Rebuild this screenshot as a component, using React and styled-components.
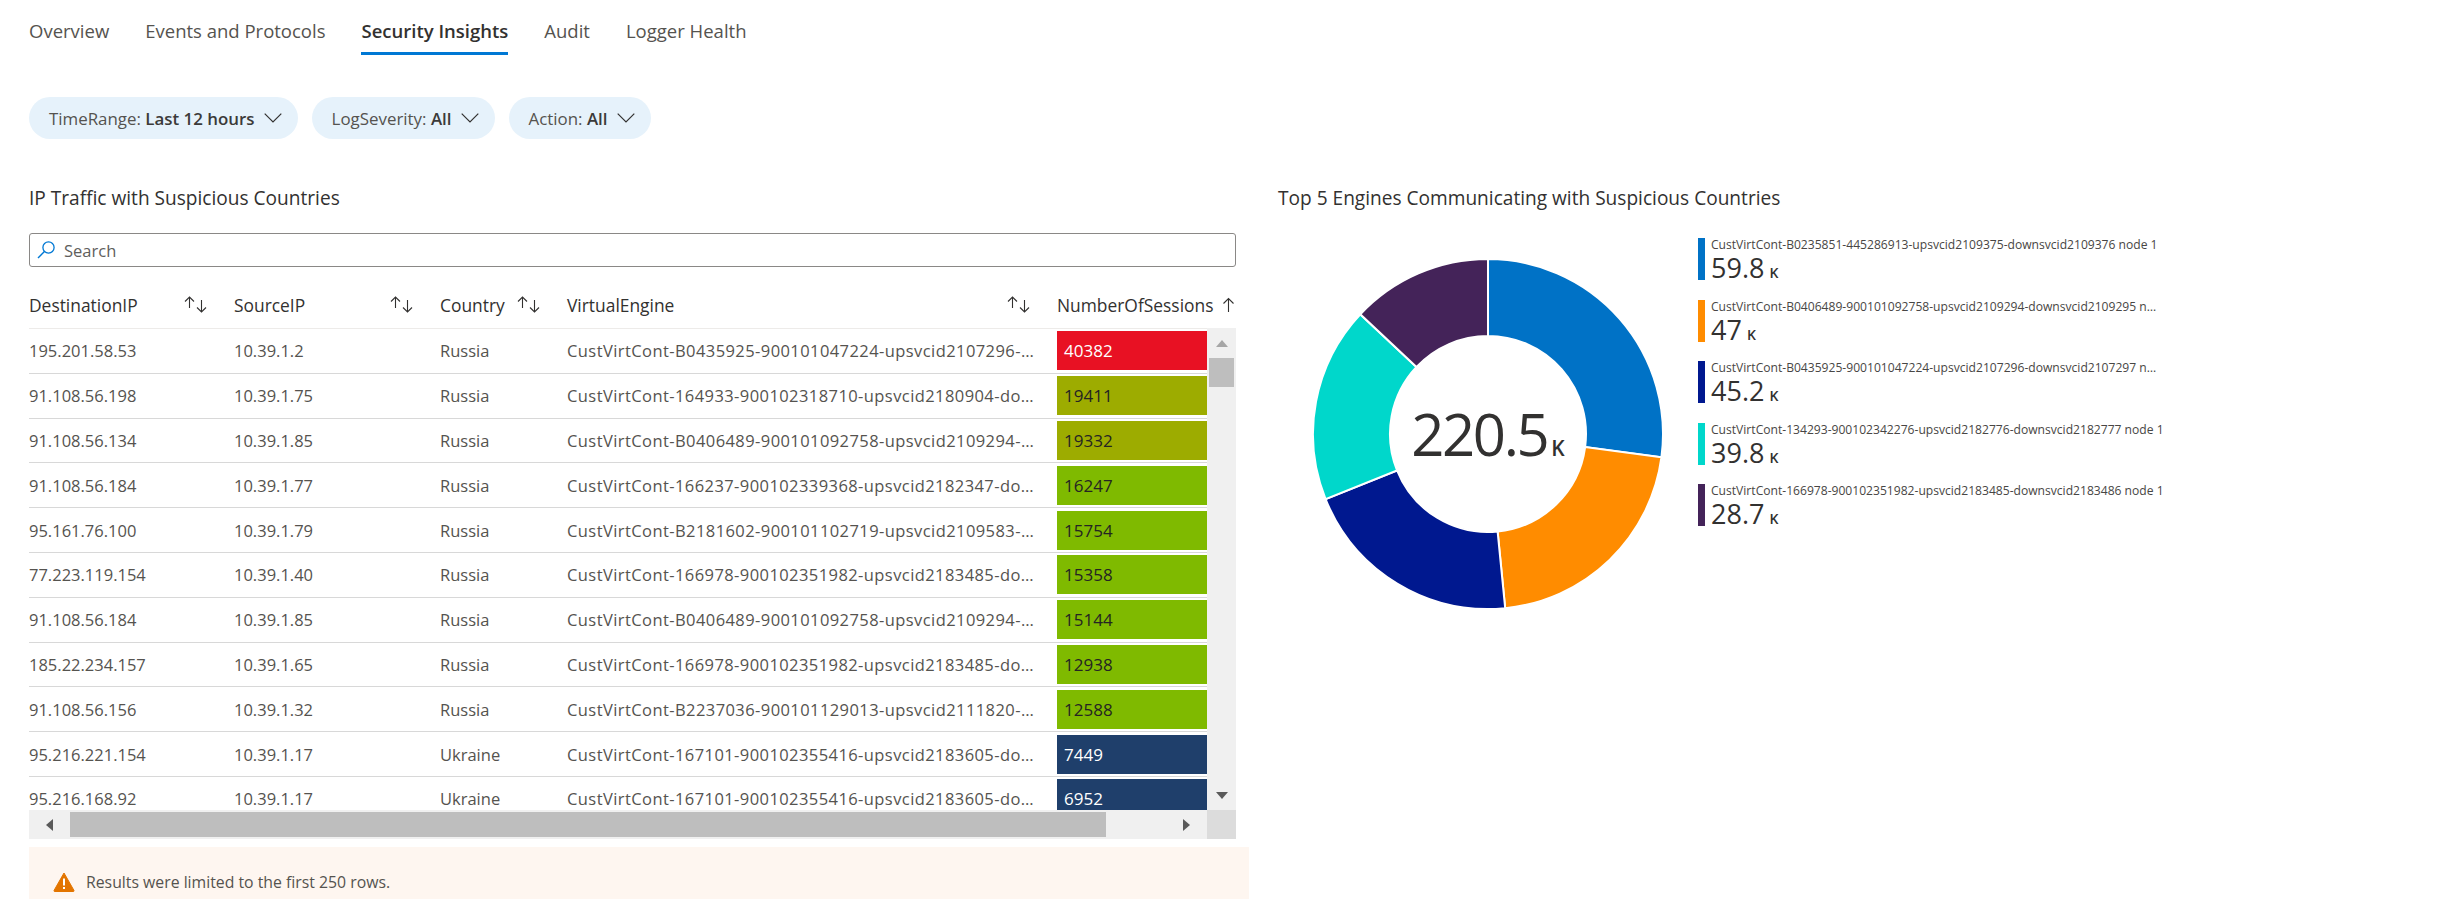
import React from "react";
import styled, { createGlobalStyle } from "styled-components";

const FONT = `"Open Sans", "Noto Sans", "Liberation Sans", sans-serif`;

const tabs = ["Overview", "Events and Protocols", "Security Insights", "Audit", "Logger Health"];

const filters = [
  { name: "TimeRange", value: "Last 12 hours" },
  { name: "LogSeverity", value: "All" },
  { name: "Action", value: "All" },
];

const columns = [
  { title: "DestinationIP", sort: "both" },
  { title: "SourceIP", sort: "both" },
  { title: "Country", sort: "both" },
  { title: "VirtualEngine", sort: "both" },
  { title: "NumberOfSessions", sort: "up" },
];

const heat = {
  red: { bg: "#e81123", fg: "#ffffff" },
  olive: { bg: "#9dac00", fg: "#252423" },
  green: { bg: "#7fba00", fg: "#252423" },
  navy: { bg: "#1f3f6b", fg: "#ffffff" },
};

const rows = [
  ["195.201.58.53", "10.39.1.2", "Russia", "B0435925-900101047224-upsvcid2107296-downsvcid2107297 node 1", 40382, "red"],
  ["91.108.56.198", "10.39.1.75", "Russia", "164933-900102318710-upsvcid2180904-downsvcid2180905 node 1", 19411, "olive"],
  ["91.108.56.134", "10.39.1.85", "Russia", "B0406489-900101092758-upsvcid2109294-downsvcid2109295 node 1", 19332, "olive"],
  ["91.108.56.184", "10.39.1.77", "Russia", "166237-900102339368-upsvcid2182347-downsvcid2182348 node 1", 16247, "green"],
  ["95.161.76.100", "10.39.1.79", "Russia", "B2181602-900101102719-upsvcid2109583-downsvcid2109584 node 1", 15754, "green"],
  ["77.223.119.154", "10.39.1.40", "Russia", "166978-900102351982-upsvcid2183485-downsvcid2183486 node 1", 15358, "green"],
  ["91.108.56.184", "10.39.1.85", "Russia", "B0406489-900101092758-upsvcid2109294-downsvcid2109295 node 1", 15144, "green"],
  ["185.22.234.157", "10.39.1.65", "Russia", "166978-900102351982-upsvcid2183485-downsvcid2183486 node 1", 12938, "green"],
  ["91.108.56.156", "10.39.1.32", "Russia", "B2237036-900101129013-upsvcid2111820-downsvcid2111821 node 1", 12588, "green"],
  ["95.216.221.154", "10.39.1.17", "Ukraine", "167101-900102355416-upsvcid2183605-downsvcid2183606 node 1", 7449, "navy"],
  ["95.216.168.92", "10.39.1.17", "Ukraine", "167101-900102355416-upsvcid2183605-downsvcid2183606 node 1", 6952, "navy"],
];

const engines = [
  { label: "CustVirtCont-B0235851-445286913-upsvcid2109375-downsvcid2109376 node 1", value: 59.8, color: "#0072c6" },
  { label: "CustVirtCont-B0406489-900101092758-upsvcid2109294-downsvcid2109295 node 1", value: 47, color: "#ff8c00", long: true },
  { label: "CustVirtCont-B0435925-900101047224-upsvcid2107296-downsvcid2107297 node 1", value: 45.2, color: "#00188f", long: true },
  { label: "CustVirtCont-134293-900102342276-upsvcid2182776-downsvcid2182777 node 1", value: 39.8, color: "#00d7cb" },
  { label: "CustVirtCont-166978-900102351982-upsvcid2183485-downsvcid2183486 node 1", value: 28.7, color: "#442359" },
];

const polar = (r, deg) => {
  const a = ((deg - 90) * Math.PI) / 180;
  return `${(175 + r * Math.cos(a)).toFixed(2)} ${(175 + r * Math.sin(a)).toFixed(2)}`;
};

const slicePath = (from, to) => {
  const large = to - from > 180 ? 1 : 0;
  return `M${polar(175, from)} A175 175 0 ${large} 1 ${polar(175, to)} L${polar(98, to)} A98 98 0 ${large} 0 ${polar(98, from)} Z`;
};

const total = engines.reduce((sum, e) => sum + e.value, 0);

const Donut = () => {
  let angle = 0;
  return (
    <svg width="350" height="350" viewBox="0 0 350 350">
      {engines.map((e) => {
        const from = angle;
        angle += (e.value / total) * 360;
        return <path key={e.label} d={slicePath(from, angle)} fill={e.color} stroke="#fff" strokeWidth="2" />;
      })}
    </svg>
  );
};

const Chevron = () => (
  <svg width="18" height="10" viewBox="0 0 18 10" fill="none">
    <path d="M0.7 0.7 L9 9 L17.3 0.7" stroke="#323130" strokeWidth="1.2" />
  </svg>
);

const SearchIcon = () => (
  <svg width="18" height="18" viewBox="0 0 18 18" fill="none">
    <circle cx="11.5" cy="6.5" r="5.6" stroke="#0078d4" strokeWidth="1.3" />
    <path d="M7.4 10.6 L1 17" stroke="#0078d4" strokeWidth="1.4" />
  </svg>
);

const SortIcon = ({ sort }) =>
  sort === "up" ? (
    <svg width="13" height="16" viewBox="0 0 13 16" fill="none">
      <path d="M6.5 15 V1.5 M1.5 6.5 L6.5 1.5 L11.5 6.5" stroke="#323130" strokeWidth="1.1" />
    </svg>
  ) : (
    <svg width="23" height="17" viewBox="0 0 23 17" fill="none">
      <path d="M5.5 12 V1 M1 5.5 L5.5 1 L10 5.5" stroke="#323130" strokeWidth="1.1" />
      <path d="M17.5 4 V16 M13 11.5 L17.5 16 L22 11.5" stroke="#323130" strokeWidth="1.1" />
    </svg>
  );

const WarningIcon = () => (
  <svg width="22" height="20" viewBox="0 0 22 20">
    <path d="M11 1 L21 18.5 Q21.3 19.5 20 19.5 H2 Q0.7 19.5 1 18.5 Z" fill="#e37500" stroke="#e37500" strokeLinejoin="round" />
    <rect x="10" y="6.5" width="2" height="7" fill="#fff" />
    <rect x="10" y="15" width="2" height="2" fill="#fff" />
  </svg>
);

const Triangle = ({ dir }) => {
  const points = {
    up: "0,7 12,7 6,0",
    down: "0,0 12,0 6,7",
    left: "7,0 7,12 0,6",
    right: "0,0 0,12 7,6",
  };
  const vertical = dir === "up" || dir === "down";
  return (
    <svg width={vertical ? 12 : 7} height={vertical ? 7 : 12}>
      <polygon points={points[dir]} fill={dir === "up" ? "#a6a6a6" : "#5a5a5a"} />
    </svg>
  );
};

export default function App() {
  return (
    <Page>
      <GlobalStyle />
      <TabBar>
        {tabs.map((t) => (
          <Tab key={t} $active={t === "Security Insights"}>
            {t}
          </Tab>
        ))}
      </TabBar>

      <FilterBar>
        {filters.map((f) => (
          <Pill key={f.name}>
            <span>
              {f.name}: <b>{f.value}</b>
            </span>
            <Chevron />
          </Pill>
        ))}
      </FilterBar>

      <Main>
        <LeftColumn>
          <Title>IP Traffic with Suspicious Countries</Title>
          <SearchBox>
            <SearchIcon />
            <SearchText>Search</SearchText>
          </SearchBox>
          <TableWrap>
            <HeaderRow>
              {columns.map((c) => (
                <HeaderCell key={c.title}>
                  <span>{c.title}</span>
                  <SortIcon sort={c.sort} />
                </HeaderCell>
              ))}
            </HeaderRow>
            <BodyArea>
              <RowList>
                {rows.map((r, i) => (
                  <Row key={i}>
                    <Cell>{r[0]}</Cell>
                    <Cell>{r[1]}</Cell>
                    <Cell>{r[2]}</Cell>
                    <EngineCell>CustVirtCont-{r[3]}</EngineCell>
                    <HeatCell $kind={r[5]}>{r[4]}</HeatCell>
                  </Row>
                ))}
              </RowList>
              <VScroll>
                <ArrowButton>
                  <Triangle dir="up" />
                </ArrowButton>
                <VThumb />
                <VSpacer />
                <ArrowButton>
                  <Triangle dir="down" />
                </ArrowButton>
              </VScroll>
            </BodyArea>
            <HScrollRow>
              <HArrow>
                <Triangle dir="left" />
              </HArrow>
              <HThumb />
              <HSpacer />
              <HArrow>
                <Triangle dir="right" />
              </HArrow>
              <Corner />
            </HScrollRow>
          </TableWrap>
          <Banner>
            <WarningIcon />
            <span>Results were limited to the first 250 rows.</span>
          </Banner>
        </LeftColumn>

        <RightColumn>
          <Title>Top 5 Engines Communicating with Suspicious Countries</Title>
          <ChartRow>
            <DonutWrap>
              <Donut />
              <DonutCenter>
                <DonutNumber>220.5</DonutNumber>
                <DonutUnit>K</DonutUnit>
              </DonutCenter>
            </DonutWrap>
            <Legend>
              {engines.map((e) => (
                <LegendItem key={e.label}>
                  <LegendBar $color={e.color} />
                  <LegendText>
                    <LegendLabel $long={e.long}>{e.label}</LegendLabel>
                    <LegendValue>
                      {e.value}
                      <LegendUnit>K</LegendUnit>
                    </LegendValue>
                  </LegendText>
                </LegendItem>
              ))}
            </Legend>
          </ChartRow>
        </RightColumn>
      </Main>
    </Page>
  );
}

const GlobalStyle = createGlobalStyle`
  html, body {
    margin: 0;
    padding: 0;
    height: 899px;
    overflow: hidden;
    background: #fff;
  }
`;

const Page = styled.div`
  height: 899px;
  overflow: hidden;
  padding-left: 29px;
  font-family: ${FONT};
  color: #323130;
  box-sizing: border-box;
`;

const TabBar = styled.div`
  display: flex;
  gap: 36px;
  height: 55px;
`;

const Tab = styled.div`
  height: 55px;
  box-sizing: border-box;
  padding-top: 18px;
  font-size: 18.5px;
  line-height: 26px;
  color: ${(p) => (p.$active ? "#323130" : "#55534f")};
  font-weight: ${(p) => (p.$active ? 600 : 400)};
  border-bottom: 3px solid ${(p) => (p.$active ? "#0078d4" : "transparent")};
`;

const FilterBar = styled.div`
  display: flex;
  gap: 14px;
  margin-top: 42px;
`;

const Pill = styled.div`
  display: flex;
  align-items: center;
  gap: 9px;
  height: 42px;
  padding: 0 16px 0 20px;
  border-radius: 21px;
  background: #e6f2fb;
  font-size: 16.9px;
  color: #55534f;

  b {
    font-weight: 600;
    color: #3b3a39;
  }
`;

const Main = styled.div`
  display: flex;
  margin-top: 46px;
`;

const LeftColumn = styled.div`
  width: 1220px;
  margin-right: 29px;
  flex: none;
`;

const RightColumn = styled.div`
  flex: 1;
  min-width: 0;
`;

const Title = styled.div`
  font-size: 19.1px;
  line-height: 26px;
  font-weight: 500;
  color: #323130;
`;

const SearchBox = styled.div`
  display: flex;
  align-items: center;
  gap: 9px;
  width: 1207px;
  height: 34px;
  margin-top: 22px;
  padding-left: 7px;
  box-sizing: border-box;
  border: 1.5px solid #8a8886;
  border-radius: 3px;
`;

const SearchText = styled.span`
  font-size: 16.5px;
  color: #605e5c;
`;

const TableWrap = styled.div`
  width: 1207px;
`;

const HeaderRow = styled.div`
  display: grid;
  grid-template-columns: 205px 206px 127px 490px 179px;
  height: 61px;
  overflow: hidden;
`;

const HeaderCell = styled.div`
  display: flex;
  align-items: center;
  justify-content: space-between;
  padding: 14px 27px 0 0;
  font-size: 17.4px;
  font-weight: 500;
  color: #323130;

  &:last-child {
    padding-right: 1px;
  }
`;

const BodyArea = styled.div`
  display: flex;
  height: 482px;
  overflow: hidden;
`;

const RowList = styled.div`
  flex: 1;
  min-width: 0;
  border-top: 1px solid #edebe9;
`;

const Row = styled.div`
  display: grid;
  grid-template-columns: 205px 206px 127px 490px 150px;
  align-items: center;
  height: 44.8px;
  box-sizing: border-box;
  border-bottom: 1.5px solid #d8d8d8;
  font-size: 16.5px;
  color: #55534f;
`;

const Cell = styled.div`
  white-space: nowrap;
`;

const EngineCell = styled(Cell)`
  padding-right: 18px;
  overflow: hidden;
  text-overflow: ellipsis;
  letter-spacing: 0.42px;
`;

const HeatCell = styled.div`
  display: flex;
  align-items: center;
  height: 39px;
  padding-left: 7px;
  font-size: 17px;
  background: ${(p) => heat[p.$kind].bg};
  color: ${(p) => heat[p.$kind].fg};
`;

const VScroll = styled.div`
  display: flex;
  flex-direction: column;
  align-items: center;
  width: 29px;
  background: #f0f0f0;
`;

const ArrowButton = styled.div`
  display: flex;
  align-items: center;
  justify-content: center;
  width: 29px;
  height: 30px;
  flex: none;
`;

const VThumb = styled.div`
  width: 25px;
  height: 29px;
  background: #bebebe;
`;

const VSpacer = styled.div`
  flex: 1;
`;

const HScrollRow = styled.div`
  display: flex;
  align-items: center;
  height: 29px;
  background: #f0f0f0;
`;

const HArrow = styled.div`
  display: flex;
  align-items: center;
  justify-content: center;
  width: 41px;
  height: 29px;
  flex: none;
`;

const HThumb = styled.div`
  width: 1036px;
  height: 25px;
  background: #bebebe;
`;

const HSpacer = styled.div`
  flex: 1;
`;

const Corner = styled.div`
  width: 29px;
  height: 29px;
  background: #dcdcdc;
`;

const Banner = styled.div`
  display: flex;
  align-items: center;
  gap: 11px;
  height: 70px;
  margin-top: 8px;
  padding: 0 0 0 24px;
  box-sizing: border-box;
  background: #fef6f0;
  font-size: 15.8px;
  color: #55534f;
`;

const ChartRow = styled.div`
  display: flex;
  align-items: flex-start;
  gap: 35px;
  margin-top: 27px;
  padding-left: 35px;
`;

const DonutWrap = styled.div`
  position: relative;
  width: 350px;
  height: 350px;
  margin-top: 21px;
  flex: none;
`;

const DonutCenter = styled.div`
  position: absolute;
  inset: 0;
  display: flex;
  align-items: baseline;
  justify-content: center;
  gap: 4px;
  font-size: 58px;
  line-height: 350px;
  color: #323130;
`;

const DonutNumber = styled.span`
  letter-spacing: -2.4px;
`;

const DonutUnit = styled.span`
  font-size: 21px;
  font-weight: 600;
`;

const Legend = styled.div`
  display: flex;
  flex-direction: column;
  gap: 19.5px;
`;

const LegendItem = styled.div`
  display: flex;
  gap: 6px;
  height: 42px;
`;

const LegendBar = styled.div`
  width: 7px;
  flex: none;
  background: ${(p) => p.$color};
`;

const LegendText = styled.div`
  min-width: 0;
  width: 456px;
`;

const LegendLabel = styled.div`
  width: ${(p) => (p.$long ? "450px" : "456px")};
  font-size: 12.1px;
  line-height: 14px;
  white-space: nowrap;
  overflow: hidden;
  text-overflow: ellipsis;
  color: #484644;
`;

const LegendValue = styled.div`
  margin-top: 1px;
  font-size: 27px;
  line-height: 30px;
  color: #323130;
`;

const LegendUnit = styled.span`
  margin-left: 5px;
  font-size: 14px;
  font-weight: 600;
`;
